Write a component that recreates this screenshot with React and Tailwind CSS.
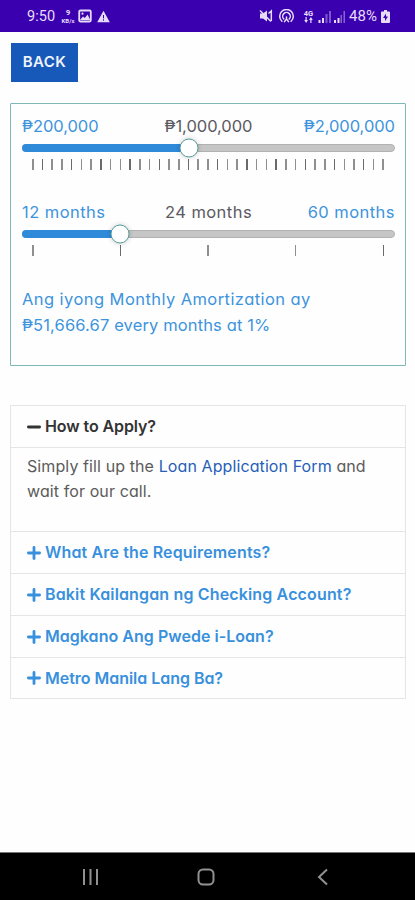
import { useState } from 'react'
import clsx from 'clsx'

const faqs = [
  { title: 'How to Apply?', tracking: 'tracking-[-0.1px]', height: 'h-[41px]' },
  { title: 'What Are the Requirements?', tracking: 'tracking-[0.14px]', height: 'h-[41px]' },
  { title: 'Bakit Kailangan ng Checking Account?', tracking: 'tracking-[0.15px]', height: 'h-[41px]' },
  { title: 'Magkano Ang Pwede i-Loan?', tracking: 'tracking-[0.03px]', height: 'h-[41px]' },
  { title: 'Metro Manila Lang Ba?', tracking: 'tracking-[-0.03px]', height: 'h-[40px]' },
]

function StatusBar() {
  return (
    <header className="flex h-8 shrink-0 items-center justify-between bg-[#3a00b0] pr-[25px] pl-[27px] text-[#e6dcf8]">
      <div className="flex items-center">
        <span className="w-[29px] pt-[2px] font-['Roboto',sans-serif] text-[14.5px] tracking-[0.1px] whitespace-nowrap">9:50</span>
        <div className="ml-[4px] flex w-[16px] flex-col items-center font-['Roboto',sans-serif] font-bold">
          <span className="text-[8px] leading-[10px]">9</span>
          <span className="-mt-px text-[6px] leading-[8px]">KB/s</span>
        </div>
        <svg className="ml-[2px]" width="14" height="14" viewBox="0 0 14 14" fill="none" stroke="currentColor" strokeWidth="1.8">
          <rect x="1.2" y="1.5" width="11.6" height="11" rx="1.2" />
          <path d="M2 11 5 7.4l1.8 1.5 2.8-3.4 2.6 5.5z" fill="currentColor" stroke="none" />
          <circle cx="4.5" cy="4.7" r="1.1" fill="currentColor" stroke="none" />
        </svg>
        <svg className="ml-[5px]" width="13" height="13" viewBox="0 0 13 13">
          <path d="M6.5.8 12.8 12.2H.2z" fill="currentColor" />
          <path d="M6.5 5v3.4M6.5 9.3v1.4" stroke="#3a00b0" strokeWidth="1" />
        </svg>
      </div>
      <div className="flex items-center">
        <svg width="14" height="14" viewBox="0 0 14 14" fill="none" stroke="currentColor" strokeWidth="1.5">
          <path d="M1 4.5h3l4-3v11l-4-3H1z" fill="currentColor" stroke="none" />
          <path d="M1 1.5 12 12.5" />
          <path d="M9.5 4.5 12.3 2v10" />
        </svg>
        <svg className="ml-[5px]" width="17" height="14" viewBox="0 0 17 14" fill="none" stroke="currentColor" strokeWidth="1.5" strokeLinecap="round">
          <path d="M3.9 12.3a6.8 6.8 0 1 1 9.2 0" />
          <path d="M5.8 10a3.8 3.8 0 1 1 5.4 0" />
          <path d="M8.5 8v2.5M6.5 12.6l2-2.6 2 2.6" />
        </svg>
        <div className="ml-[8px] flex w-[11px] flex-col items-center font-['Roboto',sans-serif] text-[7.5px] leading-[7px] font-bold">
          <span>4G</span>
          <svg width="9" height="6" viewBox="0 0 9 6" fill="currentColor">
            <path d="M1.5 0h1.2v3H4L2.1 6 .2 3h1.3zM6.3 6h1.2V3h1.3L6.9 0 5 3h1.3z" />
          </svg>
        </div>
        <svg className="ml-[4px]" width="28" height="13" viewBox="0 0 28 13" fill="currentColor">
          <path d="M.5 10h2v3h-2zM4 8h2v5H4z" />
          <path d="M7.5 4h2v9h-2zM11 1h2v12h-2z" opacity=".4" />
          <path d="M16 10h2v3h-2zM19.5 8h2v5h-2z" />
          <path d="M22.5 5h1.500v8h-1.500zM25.500 1h1.500v12h-1.500z" opacity=".45" />
        </svg>
        <span className="ml-[3px] w-[32px] pt-px font-['Roboto',sans-serif] text-[15px] tracking-[0.1px] whitespace-nowrap">48%</span>
        <svg width="9" height="13" viewBox="0 0 9 13">
          <path d="M3 0h3v1.500h2a1 1 0 0 1 1 1V12a1 1 0 0 1-1 1H1a1 1 0 0 1-1-1V2.500a1 1 0 0 1 1-1h2z" fill="currentColor" />
          <path d="M5 3.500 2 8h2v3l3-4.500H5z" fill="#3a00b0" />
        </svg>
      </div>
    </header>
  )
}

function Slider({ min, value, max, fill, ticks, tracking }) {
  return (
    <div className="h-[86px]">
      <div className={clsx('flex h-[28px] text-[16.5px] leading-[25px] whitespace-nowrap text-[#3d94dc]', tracking)}>
        <span className="flex-1">{min}</span>
        <span className="flex-1 text-center text-[#5b5962]">{value}</span>
        <span className="flex-1 text-right">{max}</span>
      </div>
      <div className="relative mt-[2px] h-[8px] rounded-full border border-[#b2b2b2] bg-[#c6c6c6]">
        <div className="absolute -inset-y-px -left-px rounded-full bg-[#2f8ad9]" style={{ width: fill }} />
        <div
          className="absolute top-1/2 h-[19px] w-[19px] -translate-x-1/2 -translate-y-1/2 rounded-full border border-[#559f9d] bg-white shadow-[0_0_5px_rgba(0,0,0,0.2)]"
          style={{ left: fill }}
        />
      </div>
      <div className="mt-[7px] flex justify-between pr-[11px] pl-[10px]">
        {Array.from({ length: ticks }, (_, i) => (
          <span key={i} className={clsx('h-[11px] w-[1.5px]', i % 3 === 1 ? 'bg-[#6a6a6a]' : 'bg-[#8f8f8f]')} />
        ))}
      </div>
    </div>
  )
}

function ToggleIcon({ open }) {
  return (
    <svg className="mr-[4px] shrink-0" width="14" height="14" viewBox="0 0 14 14" stroke="currentColor" strokeWidth="2.8" strokeLinecap="round">
      <path d="M1.4 7h11.2" />
      {!open && <path d="M7 1.4v11.2" />}
    </svg>
  )
}

export default function App() {
  const [openIndex, setOpenIndex] = useState(0)

  return (
    <div className="flex h-[900px] w-[415px] flex-col overflow-hidden bg-[#fefefe] font-['Inter','Open_Sans',sans-serif] [font-feature-settings:'cv11']">
      <StatusBar />

      <main className="flex-1 pr-[9px] pl-[10px]">
        <button className="mt-[11px] ml-px flex h-[39px] w-[67px] items-center justify-center bg-[#1759b8] text-[15px] font-semibold tracking-[0.4px] text-[#eef4fc]">
          BACK
        </button>

        <section className="mt-[21px] h-[263px] rounded-[1px] border border-[#80b8b7] pt-[10px] pr-[10px] pl-[11px]">
          <Slider min="₱200,000" value="₱1,000,000" max="₱2,000,000" fill="44.7%" ticks={37} tracking="tracking-[-0.05px]" />
          <Slider min="12 months" value="24 months" max="60 months" fill="26.1%" ticks={5} tracking="tracking-[0.45px]" />
          <p className="text-[16.5px] leading-[26px] tracking-[0.43px] whitespace-nowrap text-[#3d94dc]">
            Ang iyong Monthly Amortization ay
            <br />
            <span className="tracking-[0.13px]">₱51,666.67 every months at 1%</span>
          </p>
        </section>

        <section className="mt-[39px] border border-[#e5e5e5]">
          {faqs.map((faq, i) => (
            <div key={faq.title} className={clsx(i > 0 && 'border-t border-[#e5e5e5]')}>
              <button
                onClick={() => setOpenIndex(i)}
                className={clsx(
                  'flex w-full items-center px-[16px] text-[16px] leading-[24px] font-semibold whitespace-nowrap',
                  faq.height,
                  faq.tracking,
                  openIndex === i ? 'text-[#333333]' : 'text-[#3990dc]'
                )}
              >
                <ToggleIcon open={openIndex === i} />
                <span className="pb-px">{faq.title}</span>
              </button>
              {openIndex === i && (
                <div className="h-[84px] border-t border-[#e5e5e5] px-[16px] pt-[6px] text-[16px] leading-[25px] tracking-[0.1px] whitespace-nowrap text-[#5b5b5b]">
                  Simply fill up the <a className="text-[#275fb8]">Loan Application Form</a> and
                  <br />
                  wait for our call.
                </div>
              )}
            </div>
          ))}
        </section>
      </main>

      <nav className="flex h-[48px] shrink-0 items-center justify-between border-t border-[#777777] bg-black pr-[86px] pl-[82px] text-[#919191]">
        <svg width="17" height="18" viewBox="0 0 17 18" stroke="currentColor" strokeWidth="2">
          <path d="M2 1v16M8.5 1v16M15 1v16" />
        </svg>
        <svg className="mr-[4px]" width="18" height="18" viewBox="0 0 18 18" fill="none" stroke="currentColor" strokeWidth="2">
          <rect x="1.5" y="1.5" width="15" height="15" rx="4.5" />
        </svg>
        <svg width="12" height="18" viewBox="0 0 12 18" fill="none" stroke="currentColor" strokeWidth="2">
          <path d="M10 1.5 2 9l8 7.5" />
        </svg>
      </nav>
    </div>
  )
}
